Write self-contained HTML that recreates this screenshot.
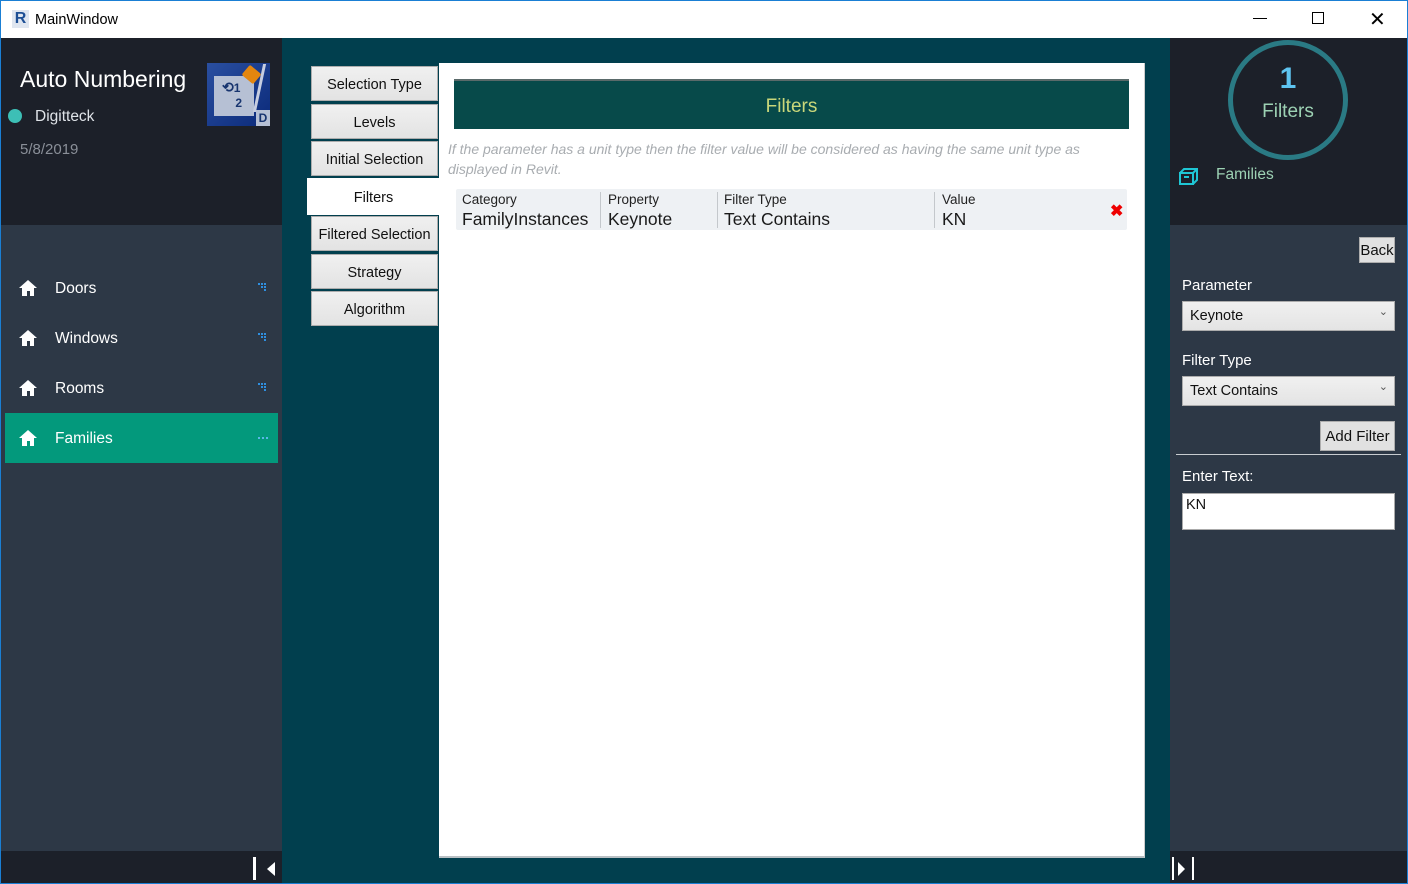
<!DOCTYPE html>
<html><head><meta charset="utf-8"><style>
*{box-sizing:border-box;margin:0;padding:0}
body{width:1408px;height:884px;overflow:hidden;font-family:"Liberation Sans",sans-serif;background:#1a7fd4;position:relative}
.abs{position:absolute}
.title{left:1px;top:1px;width:1406px;height:37px;background:#fff}
.tab{position:absolute;left:311px;width:127px;height:35px;background:linear-gradient(#f0f0f0,#e3e3e3);border:1px solid #adadad;font-size:14.5px;color:#111;text-align:center;line-height:36px}
.nav{position:absolute;left:5px;width:273px;height:50px;color:#fff;font-size:15.5px;line-height:52px}
.nav .t{position:absolute;left:50px}
.nav .house{position:absolute;left:13px;top:16px}
.nav .dots{position:absolute;left:253px;top:20px;width:10px;height:8px}
.lbl{position:absolute;left:1182px;color:#fff;font-size:15px}
.combo{position:absolute;left:1182px;width:213px;height:30px;background:linear-gradient(#f0f0f0,#e4e4e4);border:1px solid #acacac;font-size:14.5px;line-height:29px;padding-left:7px;color:#111}
.combo:after{content:"⌄";position:absolute;right:6px;top:-4px;font-size:11px;color:#555}
.btn{position:absolute;background:#e1e1e1;border:1px solid #adadad;color:#111;font-size:15px;text-align:center}
.v{position:absolute;top:209px;font-size:17.5px;color:#1a1a1a}
.h{position:absolute;top:192px;font-size:13.5px;color:#222}
</style></head><body>
<div class="abs title"></div>
<div class="abs" style="left:12px;top:10px;width:17px;height:18px;background:#dfe6f0;color:#1d4f95;font-weight:bold;font-size:16px;line-height:18px;text-align:center">R</div>
<div class="abs" style="left:35px;top:12px;font-size:14.5px;color:#000">MainWindow</div>
<div class="abs" style="left:1253px;top:18px;width:14px;height:1px;background:#000"></div>
<div class="abs" style="left:1312px;top:12px;width:12px;height:12px;border:1px solid #000"></div>
<div class="abs" style="left:1369px;top:7px;font-size:20px;color:#000;font-weight:300">✕</div>

<div class="abs" style="left:1px;top:38px;width:281px;height:187px;background:#1c2029"></div>
<div class="abs" style="left:1px;top:225px;width:281px;height:626px;background:#2d3846"></div>
<div class="abs" style="left:1px;top:851px;width:281px;height:32px;background:#1c2029"></div>
<div class="abs" style="left:20px;top:66px;color:#fff;font-size:23px">Auto Numbering</div>
<div class="abs" style="left:8px;top:109px;width:14px;height:14px;border-radius:50%;background:#3dbfb6"></div>
<div class="abs" style="left:35px;top:108px;color:#dfe3e8;font-size:15.5px">Digitteck</div>
<div class="abs" style="left:20px;top:141px;color:#8a8f98;font-size:15px">5/8/2019</div>
<div class="abs" style="left:207px;top:63px;width:63px;height:63px;background:linear-gradient(135deg,#2a4fa0,#0b2a7a)"></div>
<div class="abs" style="left:214px;top:76px;width:40px;height:40px;background:#b6c0d4"></div>
<div class="abs" style="left:222px;top:80px;color:#17346f;font-weight:bold;font-size:14px;line-height:14px">⟲<span style="font-size:12px">1<br>&nbsp;&nbsp;&nbsp;&nbsp;2</span></div>
<div class="abs" style="left:244px;top:68px;width:15px;height:13px;background:#e3860f;transform:rotate(40deg);border-radius:2px"></div>
<div class="abs" style="left:256px;top:110px;width:14px;height:16px;background:#b6c0d4;color:#17346f;font-weight:bold;font-size:12px;text-align:center;line-height:16px">D</div>
<div class="abs" style="left:258px;top:64px;width:3px;height:48px;background:#c6cde0;transform:skewX(-12deg)"></div>

<div class="nav" style="top:263px"><svg class="house" width="20" height="18" viewBox="0 0 20 18"><path d="M10 1L1 9h3v8h5v-5h3v5h4V9h3z" fill="#fff"/></svg><span class="t">Doors</span><svg class="dots" viewBox="0 0 10 8"><g fill="#2f8fe0"><rect x="0" y="0" width="2" height="2"/><rect x="3" y="0" width="2" height="2"/><rect x="6" y="0" width="2" height="2"/><rect x="3" y="3" width="2" height="2"/><rect x="6" y="3" width="2" height="2"/><rect x="6" y="6" width="2" height="2"/></g></svg></div>
<div class="nav" style="top:313px"><svg class="house" width="20" height="18" viewBox="0 0 20 18"><path d="M10 1L1 9h3v8h5v-5h3v5h4V9h3z" fill="#fff"/></svg><span class="t">Windows</span><svg class="dots" viewBox="0 0 10 8"><g fill="#2f8fe0"><rect x="0" y="0" width="2" height="2"/><rect x="3" y="0" width="2" height="2"/><rect x="6" y="0" width="2" height="2"/><rect x="3" y="3" width="2" height="2"/><rect x="6" y="3" width="2" height="2"/><rect x="6" y="6" width="2" height="2"/></g></svg></div>
<div class="nav" style="top:363px"><svg class="house" width="20" height="18" viewBox="0 0 20 18"><path d="M10 1L1 9h3v8h5v-5h3v5h4V9h3z" fill="#fff"/></svg><span class="t">Rooms</span><svg class="dots" viewBox="0 0 10 8"><g fill="#2f8fe0"><rect x="0" y="0" width="2" height="2"/><rect x="3" y="0" width="2" height="2"/><rect x="6" y="0" width="2" height="2"/><rect x="3" y="3" width="2" height="2"/><rect x="6" y="3" width="2" height="2"/><rect x="6" y="6" width="2" height="2"/></g></svg></div>
<div class="nav" style="top:413px;background:#03997c"><svg class="house" width="20" height="18" viewBox="0 0 20 18"><path d="M10 1L1 9h3v8h5v-5h3v5h4V9h3z" fill="#fff"/></svg><span class="t">Families</span><svg class="dots" style="top:24px;height:2px" viewBox="0 0 10 2"><g fill="#5ab8e8"><rect x="0" y="0" width="2" height="2"/><rect x="4" y="0" width="2" height="2"/><rect x="8" y="0" width="2" height="2"/></g></svg></div>
<div class="abs" style="left:253px;top:857px;width:3px;height:23px;background:#fff"></div>
<div class="abs" style="left:267px;top:862px;width:0;height:0;border-top:7px solid transparent;border-bottom:7px solid transparent;border-right:8px solid #fff"></div>

<div class="abs" style="left:282px;top:38px;width:888px;height:845px;background:#013f4e"></div>
<div class="tab" style="top:66px">Selection Type</div>
<div class="tab" style="top:104px">Levels</div>
<div class="tab" style="top:141px">Initial Selection</div>
<div class="tab" style="top:216px">Filtered Selection</div>
<div class="tab" style="top:254px">Strategy</div>
<div class="tab" style="top:291px">Algorithm</div>
<div class="abs" style="left:439px;top:63px;width:706px;height:795px;background:#fff;border-right:1px solid #ccc;border-bottom:2px solid #b9c0c4"></div>
<div class="abs" style="left:307px;top:178px;width:133px;height:37px;background:#fff;font-size:14.5px;color:#111;text-align:center;line-height:40px">Filters</div>
<div class="abs" style="left:454px;top:79px;width:675px;height:50px;background:#074a4a;border-top:2px solid #5a6a6a;color:#c9d77a;font-size:19px;text-align:center;line-height:52px">Filters</div>
<div class="abs" style="left:448px;top:137px;width:680px;color:#a8acb0;font-style:italic;font-size:14px;line-height:20px;padding-top:2px">If the parameter has a unit type then the filter value will be considered as having the same unit type as displayed in Revit.</div>
<div class="abs" style="left:456px;top:189px;width:671px;height:41px;background:#eef1f4;border-radius:2px"></div>
<div class="h" style="left:462px">Category</div>
<div class="v" style="left:462px">FamilyInstances</div>
<div class="abs" style="left:600px;top:192px;width:1px;height:36px;background:#c4c8cc"></div>
<div class="h" style="left:608px">Property</div>
<div class="v" style="left:608px">Keynote</div>
<div class="abs" style="left:717px;top:192px;width:1px;height:36px;background:#c4c8cc"></div>
<div class="h" style="left:724px">Filter Type</div>
<div class="v" style="left:724px">Text Contains</div>
<div class="abs" style="left:934px;top:192px;width:1px;height:36px;background:#c4c8cc"></div>
<div class="h" style="left:942px">Value</div>
<div class="v" style="left:942px">KN</div>
<div class="abs" style="left:1110px;top:201px;color:#e00;font-size:16px;font-weight:bold">✖</div>

<div class="abs" style="left:1170px;top:38px;width:237px;height:187px;background:#1c2029"></div>
<div class="abs" style="left:1170px;top:225px;width:237px;height:626px;background:#2d3846"></div>
<div class="abs" style="left:1170px;top:851px;width:237px;height:32px;background:#1c2029"></div>
<div class="abs" style="left:1228px;top:40px;width:120px;height:120px;border-radius:50%;border:5px solid #2a7a84"></div>
<div class="abs" style="left:1228px;top:62px;width:120px;text-align:center;color:#5ec4f0;font-size:30px;font-weight:bold">1</div>
<div class="abs" style="left:1228px;top:101px;width:120px;text-align:center;color:#9dd2b4;font-size:19px">Filters</div>
<svg class="abs" style="left:1178px;top:166px" width="20" height="20" viewBox="0 0 20 20"><path d="M2 7h13v11H2zM2 7l4-4h13v11l-4 4M15 7l4-4M6 11h5" fill="none" stroke="#1fc6d4" stroke-width="2"/></svg>
<div class="abs" style="left:1216px;top:166px;color:#9dd2b4;font-size:15.5px">Families</div>
<div class="btn" style="left:1359px;top:237px;width:36px;height:26px;line-height:26px">Back</div>
<div class="lbl" style="top:277px">Parameter</div>
<div class="combo" style="top:301px">Keynote</div>
<div class="lbl" style="top:352px">Filter Type</div>
<div class="combo" style="top:376px">Text Contains</div>
<div class="btn" style="left:1320px;top:421px;width:75px;height:30px;line-height:30px">Add Filter</div>
<div class="abs" style="left:1176px;top:454px;width:225px;height:1px;background:#c8ccd0"></div>
<div class="lbl" style="top:468px">Enter Text:</div>
<div class="abs" style="left:1182px;top:493px;width:213px;height:37px;background:#fff;border:1px solid #aaa;font-size:14.5px;padding:3px 3px;color:#111">KN</div>
<div class="abs" style="left:1172px;top:857px;width:2px;height:23px;background:#fff"></div>
<div class="abs" style="left:1178px;top:862px;width:0;height:0;border-top:7px solid transparent;border-bottom:7px solid transparent;border-left:7px solid #fff"></div>
<div class="abs" style="left:1192px;top:857px;width:2px;height:23px;background:#fff"></div>
</body></html>
